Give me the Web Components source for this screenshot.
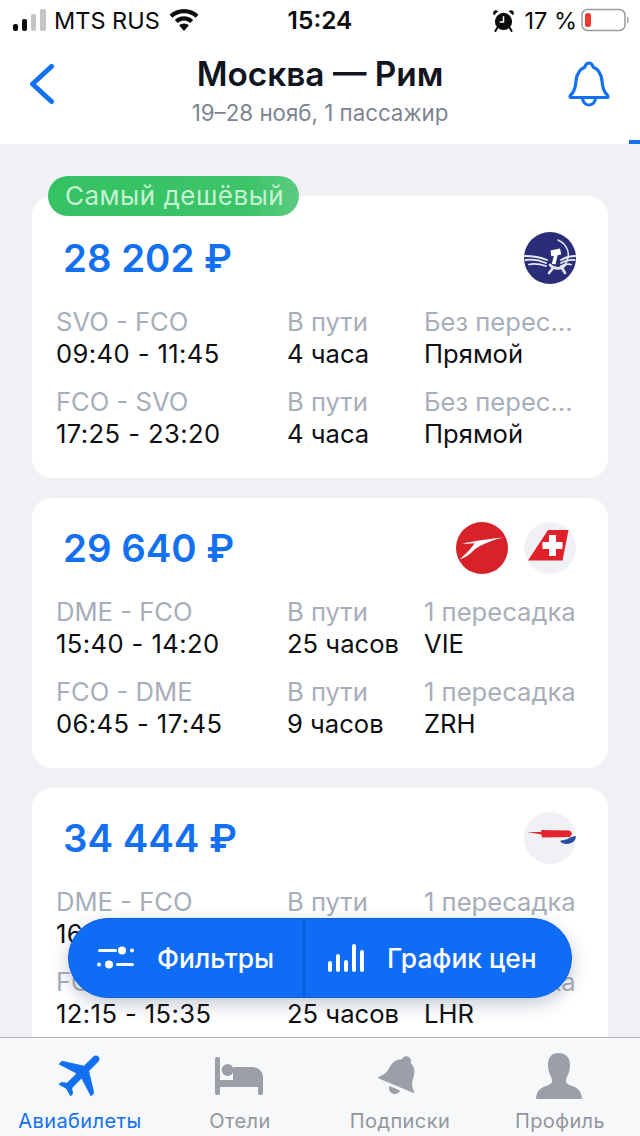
<!DOCTYPE html>
<html lang="ru">
<head>
<meta charset="utf-8">
<title>Москва — Рим</title>
<style>
  html, body { margin: 0; padding: 0; }
  body { width: 640px; height: 1136px; overflow: hidden; font-family: Inter, "Liberation Sans", sans-serif; background: #eff1f5; }
</style>
</head>
<body>
<app-screen>
  <status-bar slot="status"></status-bar>
  <nav-header slot="nav" title="Москва — Рим" subtitle="19–28 нояб, 1 пассажир"></nav-header>

  <flight-card price="28 202 ₽" badge="Самый дешёвый">
    <airline-logo slot="logos" name="aeroflot"></airline-logo>
    <flight-row route="SVO - FCO" times="09:40 - 11:45" duration="4 часа" stops="Без перес..." via="Прямой"></flight-row>
    <flight-row route="FCO - SVO" times="17:25 - 23:20" duration="4 часа" stops="Без перес..." via="Прямой"></flight-row>
  </flight-card>

  <flight-card price="29 640 ₽">
    <airline-logo slot="logos" name="austrian"></airline-logo>
    <airline-logo slot="logos" name="swiss"></airline-logo>
    <flight-row route="DME - FCO" times="15:40 - 14:20" duration="25 часов" stops="1 пересадка" via="VIE"></flight-row>
    <flight-row route="FCO - DME" times="06:45 - 17:45" duration="9 часов" stops="1 пересадка" via="ZRH"></flight-row>
  </flight-card>

  <flight-card price="34 444 ₽">
    <airline-logo slot="logos" name="british"></airline-logo>
    <flight-row route="DME - FCO" times="16:40 - 14:20" duration="25 часов" stops="1 пересадка" via="LHR"></flight-row>
    <flight-row route="FCO - DME" times="12:15 - 15:35" duration="25 часов" stops="1 пересадка" via="LHR"></flight-row>
  </flight-card>

  <action-pill slot="overlay"></action-pill>

  <tab-bar slot="tabs">
    <tab-item label="Авиабилеты" icon="plane" active></tab-item>
    <tab-item label="Отели" icon="bed"></tab-item>
    <tab-item label="Подписки" icon="bell"></tab-item>
    <tab-item label="Профиль" icon="person"></tab-item>
  </tab-bar>
</app-screen>

<script>
class AppScreen extends HTMLElement {
  constructor() {
    super();
    this.attachShadow({ mode: "open" });
    this.shadowRoot.innerHTML = `
      <style>
        :host { display: flex; flex-direction: column; position: relative; width: 640px; height: 1136px; overflow: hidden; background: #eff1f5; }
        .top { flex: none; background: #fff; position: relative; }
        .progress { position: absolute; right: 0; bottom: 0; width: 11px; height: 4px; background: #1370f0; }
        .list { flex: 1; min-height: 0; overflow: hidden; display: flex; flex-direction: column; gap: 20px; padding: 52px 32px 0; }
        .tabs { flex: none; }
        ::slotted(action-pill) { position: absolute; left: 68px; top: 918px; }
      </style>
      <div class="top">
        <slot name="status"></slot>
        <slot name="nav"></slot>
        <div class="progress"></div>
      </div>
      <div class="list"><slot></slot></div>
      <slot name="overlay"></slot>
      <div class="tabs"><slot name="tabs"></slot></div>
    `;
  }
}

class StatusBar extends HTMLElement {
  constructor() {
    super();
    this.attachShadow({ mode: "open" });
    this.shadowRoot.innerHTML = `
      <style>
        :host { display: grid; grid-template-columns: 1fr auto 1fr; align-items: center; height: 40px; color: #0b0b0d; font-size: 23.500px; }
        .left, .right { display: flex; align-items: center; }
        .left { gap: 7px; padding-left: 13px; }
        .right { justify-content: flex-end; padding-right: 9px; }
        .time { font-weight: 600; font-size: 24.500px; }
        .pct { margin: 0 4px 0 10px; }
        svg { display: block; flex: none; }
        .wifi { margin-left: 2px; }
      </style>
      <div class="left">
        <svg width="34" height="22" viewBox="0 0 34 22">
          <rect x="0" y="15" width="5" height="7" rx="2" fill="#0b0b0d"/>
          <rect x="9" y="10" width="5" height="12" rx="2" fill="#0b0b0d"/>
          <rect x="18" y="5" width="5" height="17" rx="2" fill="#c4c5c7"/>
          <rect x="27" y="0" width="6" height="22" rx="2" fill="#c4c5c7"/>
        </svg>
        <span class="carrier">MTS RUS</span>
        <svg class="wifi" width="30" height="22" viewBox="0 0 30 22" fill="#0b0b0d">
          <path d="M15 0C9.300 0 4.300 2.200 .5 5.800l3 3C6.400 6 10.500 4.300 15 4.300S23.600 6 26.500 8.800l3-3C25.700 2.200 20.700 0 15 0z"/>
          <path d="M15 7.300c-3.600 0-6.800 1.400-9.200 3.700l3 3c1.600-1.500 3.800-2.500 6.200-2.500s4.600 1 6.200 2.500l3-3c-2.400-2.300-5.600-3.700-9.200-3.700z"/>
          <path d="M15 14.500c-1.900 0-3.500.7-4.800 1.900L15 22l4.800-5.600c-1.300-1.200-2.900-1.900-4.800-1.900z"/>
        </svg>
      </div>
      <div class="time">15:24</div>
      <div class="right">
        <svg width="21" height="23" viewBox="0 0 22 24">
          <circle cx="11" cy="13" r="9" fill="#0b0b0d"/>
          <path d="M1 6.500 5.500 2.200C3.800.9 1.500 1.200.6 2.700-.2 4 .1 5.500 1 6.500zM21 6.500 16.500 2.200c1.700-1.300 4-1 4.900.5.800 1.300.5 2.800-.4 3.800z" fill="#0b0b0d"/>
          <path d="M11 7.500V13.500H7" fill="none" stroke="#fff" stroke-width="1.600"/>
          <path d="M4.500 19.500 2.500 23M17.500 19.500l2 3.500" stroke="#0b0b0d" stroke-width="2" stroke-linecap="round"/>
        </svg>
        <span class="pct">17 %</span>
        <svg width="50" height="24" viewBox="0 0 50 24">
          <rect x="1" y="1.500" width="43" height="21" rx="5.500" fill="none" stroke="#9b9b9b" stroke-width="1.500"/>
          <rect x="4" y="5" width="6" height="14" rx="2.500" fill="#f33a30"/>
          <path d="M46 8.500c1.300.5 1.800 1.900 1.800 3.500s-.5 3-1.800 3.500z" fill="#a9a9a9"/>
        </svg>
      </div>
    `;
  }
}

class NavHeader extends HTMLElement {
  constructor() {
    super();
    this.attachShadow({ mode: "open" });
  }

  connectedCallback() {
    this.shadowRoot.innerHTML = `
      <style>
        :host { display: grid; grid-template-columns: 1fr auto 1fr; align-items: start; height: 104px; padding: 0 30px; }
        .back { margin-top: 23px; }
        .bell { margin: 21px 0 0 auto; }
        .center { text-align: center; }
        .title { margin-top: 14px; font-size: 33.400px; line-height: 40px; font-weight: 600; color: #10151f; white-space: nowrap; }
        .sub { margin-top: 4px; font-size: 22.300px; line-height: 30px; color: #7c8492; white-space: nowrap; }
        svg { display: block; }
      </style>
      <svg class="back" width="26" height="42" viewBox="0 0 26 42" fill="none" stroke="#1370f0" stroke-width="5" stroke-linecap="round" stroke-linejoin="round">
        <path d="M21.500 3.500 2.500 21l19 17.500"/>
      </svg>
      <div class="center">
        <div class="title">${this.getAttribute("title")}</div>
        <div class="sub">${this.getAttribute("subtitle")}</div>
      </div>
      <svg class="bell" width="42" height="46" viewBox="0 0 42 46" fill="none" stroke="#1370f0" stroke-width="3.200" stroke-linejoin="round">
        <path d="M2 35.500c0-1.200 1.200-1.800 2.500-3.500 2.700-3.300 3-7 3.500-12C8.700 12 12.500 8 16.800 6c.8-2.500 2.200-4 4.200-4s3.400 1.500 4.200 4C29.500 8 33.300 12 34 20c.5 5 .8 8.700 3.500 12 1.300 1.700 2.500 2.300 2.500 3.500 0 .6-.5 1-1.200 1H3.200c-.7 0-1.200-.4-1.200-1z"/>
        <path d="M14.500 37c0 4 3 7 6.500 7s6.500-3 6.500-7"/>
      </svg>
    `;
  }
}

class FlightCard extends HTMLElement {
  constructor() {
    super();
    this.attachShadow({ mode: "open" });
  }

  connectedCallback() {
    const badge = this.getAttribute("badge");
    this.shadowRoot.innerHTML = `
      <style>
        :host { display: block; position: relative; flex: none; background: #fff; border-radius: 20px; padding: ${badge ? 36 : 24}px 32px 28px 24px; }
        .badge { position: absolute; left: 16px; top: -20px; height: 40px; padding: 0 15px 0 17px; border-radius: 20px; background: linear-gradient(90deg, #35c263, #3cc468 80%, #5ccb83); color: #c6f2d4; font-size: 26px; line-height: 40px; letter-spacing: 0.5px; white-space: nowrap; }
        .head { display: flex; align-items: center; justify-content: space-between; height: 52px; margin-bottom: 22px; }
        .price { margin-left: 7px; font-size: 38.400px; font-weight: 600; color: #1370f0; white-space: nowrap; }
        .logos { display: flex; gap: 16px; }
        .rows { display: flex; flex-direction: column; gap: 16px; }
      </style>
      ${badge ? `<div class="badge">${badge}</div>` : ""}
      <div class="head">
        <div class="price">${this.getAttribute("price")}</div>
        <div class="logos"><slot name="logos"></slot></div>
      </div>
      <div class="rows"><slot></slot></div>
    `;
  }
}

class FlightRow extends HTMLElement {
  constructor() {
    super();
    this.attachShadow({ mode: "open" });
  }

  connectedCallback() {
    const get = (name) => this.getAttribute(name);
    this.shadowRoot.innerHTML = `
      <style>
        :host { display: grid; grid-template-columns: 231px 137px minmax(0, 1fr); font-size: 25.600px; line-height: 32px; }
        div { white-space: nowrap; }
        .label { color: #a7aeba; }
        .value { color: #0e0f12; }
        .times { letter-spacing: 0.4px; }
      </style>
      <div class="label">${get("route")}</div>
      <div class="label">В пути</div>
      <div class="label">${get("stops")}</div>
      <div class="value times">${get("times")}</div>
      <div class="value">${get("duration")}</div>
      <div class="value">${get("via")}</div>
    `;
  }
}

const AIRLINE_LOGOS = {
  aeroflot: `
    <circle cx="26" cy="26" r="26" fill="#2a2e78"/>
    <g fill="none" stroke="#e8e9f2" stroke-linecap="round">
      <g stroke-width="1.800">
        <path d="M.5 24C8 24 16 25 23 28M1.500 28C8 27 15 28 22 31M5 32.500C10 31 16 32 22 34"/>
        <path d="M51.500 24C47 24 42 25 37 28M50.500 28C46 27.500 42 28 37 31M47 32.500C44 31.500 41 32 37 34"/>
      </g>
      <path d="M34 8C43 12 48 22 41 33" stroke-width="1.500"/>
      <path d="M41 33C37 38 30 37 26 33" stroke-width="2.600"/>
      <path d="M29 36 25 41M38 36 41 41" stroke-width="2.600"/>
    </g>
    <path d="M26.500 18.500 36 16.500l1.300 6-3.700.8-2.100 9.200-3.700-.8 2.100-8-2.600.5z" fill="#fff"/>`,
  austrian: `
    <circle cx="26" cy="26" r="26" fill="#d8222a"/>
    <path d="M47 15.500C35 16.500 19 19 6 21.500c4 .3 8 .1 12.500-.2C15 27 9 33 3.500 37.500c6-2 11-5.500 15.500-10.500C27 21.500 37 18 47 15.500z" fill="#fff"/>`,
  swiss: `
    <circle cx="26" cy="26" r="26" fill="#eff1f5"/>
    <path d="M4 38.500 24 8h20.500L38.500 38.500z" fill="#e2202b"/>
    <path d="M25 13h7v7h6.500v7H32v7h-7v-7h-6.500v-7H25z" fill="#fff"/>`,
  british: `
    <circle cx="26" cy="26" r="26" fill="#eff1f5"/>
    <path d="M3 20 17 20l.5-2 27.500.5 2 1 1 2.500-2 3-28 .5-.5-3z" fill="#e4252f"/>
    <path d="M36 29C40 28 45 27 47 25L52 24C52 27 50 30 47 31 43 33 38 32 36 29z" fill="#2a4da0"/>`
};

class AirlineLogo extends HTMLElement {
  constructor() {
    super();
    this.attachShadow({ mode: "open" });
  }

  connectedCallback() {
    this.shadowRoot.innerHTML = `
      <style>
        :host { display: block; width: 52px; height: 52px; }
        svg { display: block; }
      </style>
      <svg width="52" height="52" viewBox="0 0 52 52">${AIRLINE_LOGOS[this.getAttribute("name")]}</svg>
    `;
  }
}

class ActionPill extends HTMLElement {
  constructor() {
    super();
    this.attachShadow({ mode: "open" });
    this.shadowRoot.innerHTML = `
      <style>
        :host { display: flex; width: 504px; height: 80px; box-sizing: border-box; border: 1px solid #0d5fe0; border-radius: 40px; background: #0f6cf5; color: #fff; font-size: 26.400px; font-weight: 500; box-shadow: 0 6px 18px rgba(40, 60, 100, .28); }
        .part { display: flex; align-items: center; height: 100%; box-sizing: border-box; white-space: nowrap; }
        .filters { width: 236px; padding-left: 28px; gap: 22px; border-right: 2px solid #0b5cd8; }
        .chart { flex: 1; padding-left: 23px; gap: 23px; }
        svg { display: block; flex: none; }
      </style>
      <div class="part filters">
        <svg width="38" height="26" viewBox="0 0 38 26" fill="#fff">
          <rect x="1" y="4" width="19" height="3" rx="1.500"/>
          <circle cx="25" cy="5.500" r="4"/>
          <circle cx="35" cy="5.500" r="2"/>
          <circle cx="2" cy="19.500" r="2"/>
          <circle cx="12" cy="19.500" r="4"/>
          <rect x="19" y="18" width="18" height="3" rx="1.500"/>
        </svg>
        <span>Фильтры</span>
      </div>
      <div class="part chart">
        <svg width="36" height="28" viewBox="0 0 36 28" fill="#fff">
          <rect x="0" y="17" width="4" height="11" rx="2"/>
          <rect x="8" y="10" width="4" height="18" rx="2"/>
          <rect x="16" y="16" width="4" height="12" rx="2"/>
          <rect x="24" y="0" width="4" height="28" rx="2"/>
          <rect x="32" y="6" width="4" height="22" rx="2"/>
        </svg>
        <span>График цен</span>
      </div>
    `;
  }
}

class TabBar extends HTMLElement {
  constructor() {
    super();
    this.attachShadow({ mode: "open" });
    this.shadowRoot.innerHTML = `
      <style>
        :host { display: grid; grid-template-columns: repeat(4, 1fr); height: 98px; border-top: 1px solid #b4b5b7; background: #f7f8f9; }
      </style>
      <slot></slot>
    `;
  }
}

const TAB_ICONS = {
  plane: `<g transform="translate(1.500 -2.500) rotate(45 26 26) translate(-1.600 -2.800) scale(2.400)" fill="currentColor"><path d="M21 16v-2l-8-5V3.500c0-.83-.67-1.500-1.500-1.500S10 2.670 10 3.500V9l-8 5v2l8-2.500V19l-2 1.500V22l3.500-1 3.500 1v-1.500L13 19v-5.500l8 2.500z"/></g>`,
  bed: `<g fill="currentColor"><rect x="1" y="7" width="5" height="38" rx="2"/><circle cx="13.700" cy="20" r="6"/><path d="M21 17h17c6 0 11 4 11 10v16a2 2 0 0 1-2 2h-1a2 2 0 0 1-2-2v-6H6v-7h13V19a2 2 0 0 1 2-2z"/></g>`,
  bell: `<g fill="currentColor" transform="rotate(23 26 26) translate(1.300 1.300) scale(.95)"><path d="M26 4c3 0 5 2 5 5 5.500 2 8 7 8.500 12 .5 6 1.500 10 6.500 14 1 .8.500 2-.5 2H6.500c-1 0-1.500-1.200-.5-2 5-4 6-8 6.500-14 .5-5 3-10 8.500-12 0-3 2-5 5-5z"/><path d="M20 40h12c0 3.500-2.500 6-6 6s-6-2.500-6-6z"/></g>`,
  person: `<path fill="currentColor" d="M24.500 3c7 0 11.500 4.500 11.500 11.500 0 3.500-.5 6.500-1.500 9-1 2.500-2.500 4.500-2.500 7 0 3 2 4 6 5.500 6 2 9.500 5 10 13H2c.5-8 4-11 10-13 4-1.500 6-2.500 6-5.500 0-2.500-1.500-4.500-2.500-7-1-2.500-1.500-5.500-1.500-9C14 7.500 17.500 3 24.500 3z"/>`
};

class TabItem extends HTMLElement {
  constructor() {
    super();
    this.attachShadow({ mode: "open" });
  }

  connectedCallback() {
    const color = this.hasAttribute("active") ? "#1370f0" : "#9a9fa8";
    const textColor = this.hasAttribute("active") ? "#1370f0" : "#92969d";
    this.shadowRoot.innerHTML = `
      <style>
        :host { display: flex; flex-direction: column; align-items: center; }
        svg { display: block; margin-top: 12px; color: ${color}; }
        span { margin-top: 7px; font-size: 20px; line-height: 24px; letter-spacing: 0.4px; color: ${textColor}; white-space: nowrap; }
      </style>
      <svg width="52" height="52" viewBox="0 0 52 52">${TAB_ICONS[this.getAttribute("icon")]}</svg>
      <span>${this.getAttribute("label")}</span>
    `;
  }
}

customElements.define("app-screen", AppScreen);
customElements.define("status-bar", StatusBar);
customElements.define("nav-header", NavHeader);
customElements.define("flight-card", FlightCard);
customElements.define("flight-row", FlightRow);
customElements.define("airline-logo", AirlineLogo);
customElements.define("action-pill", ActionPill);
customElements.define("tab-bar", TabBar);
customElements.define("tab-item", TabItem);
</script>
</body>
</html>
